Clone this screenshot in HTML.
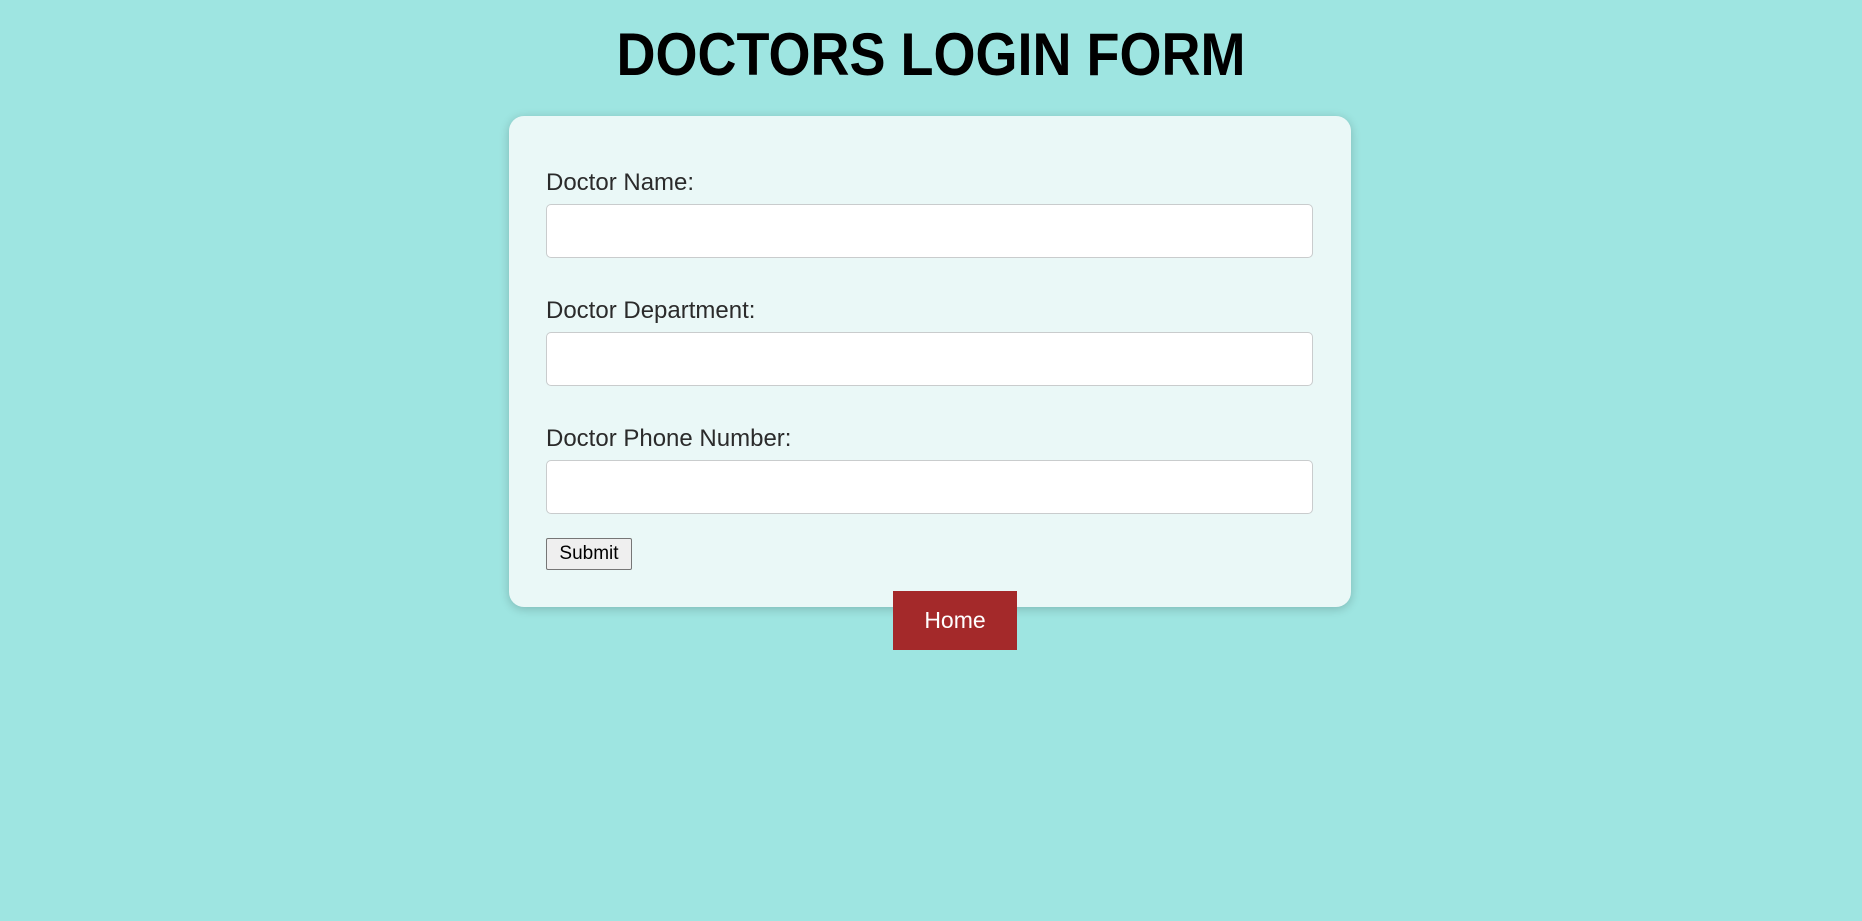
<!DOCTYPE html>
<html><head><meta charset="utf-8"><style>
html,body{margin:0;padding:0;width:1862px;height:921px;background:#9ee5e1;font-family:"Liberation Sans",Arial,sans-serif;overflow:hidden;position:relative}
h1{position:absolute;left:0;width:1862px;top:22px;margin:0;text-align:center;font-size:60px;font-weight:bold;color:#000;line-height:66px;transform:scaleX(0.9);transform-origin:931px 0}
.card{position:absolute;left:509px;top:116px;width:842px;height:491px;background:#eaf8f7;border-radius:15px;box-shadow:0 2px 10px rgba(0,0,0,0.2)}
.lbl{position:absolute;left:546px;font-size:24px;color:#2b2b2b;line-height:26px}
.inp{position:absolute;left:546px;width:765px;height:52px;background:#fff;border:1px solid #c9cccd;border-radius:5px}
.sub{position:absolute;left:546px;top:538px;width:84px;height:30px;background:#efefef;border:1px solid #767676;border-radius:2px;font-size:19px;line-height:30px;text-align:center;color:#000}
.home{position:absolute;left:893px;top:591px;width:124px;height:59px;background:#a4292a;color:#fff;font-size:23px;line-height:59px;text-align:center}
</style></head><body>
<h1>DOCTORS LOGIN FORM</h1>
<div class="card"></div>
<div class="lbl" style="top:170px">Doctor Name:</div>
<div class="inp" style="top:204px"></div>
<div class="lbl" style="top:298px">Doctor Department:</div>
<div class="inp" style="top:332px"></div>
<div class="lbl" style="top:426px">Doctor Phone Number:</div>
<div class="inp" style="top:460px"></div>
<div class="sub">Submit</div>
<div class="home">Home</div>
</body></html>
